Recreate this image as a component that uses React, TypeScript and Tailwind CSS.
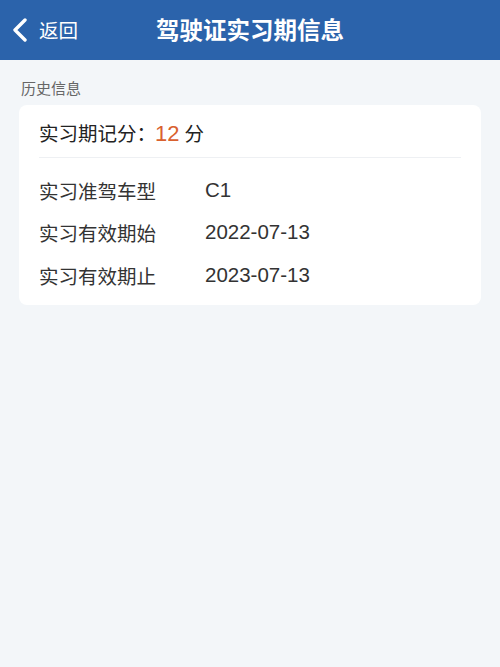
const rows = [
  { label: '实习准驾车型', value: 'C1' },
  { label: '实习有效期始', value: '2022-07-13' },
  { label: '实习有效期止', value: '2023-07-13' },
];

const latin = { fontFamily: '"Liberation Sans", "Noto Sans CJK SC", sans-serif' };

export default function App() {
  return (
    <div
      className="min-h-[667px] bg-[#f3f6f9]"
      style={{ fontFamily: '"Noto Sans CJK SC", "Liberation Sans", sans-serif' }}
    >
      <div className="relative flex h-[60px] items-center bg-[#2b63ab] text-white">
        <div className="flex items-center pl-[11px]">
          <svg width="17" height="24" viewBox="0 0 17 24" fill="none">
            <polyline
              points="14,2 4,12 14,22"
              stroke="white"
              strokeWidth="3.4"
              strokeLinecap="round"
              strokeLinejoin="round"
            />
          </svg>
          <span className="ml-[11px] text-[19.5px]">返回</span>
        </div>
        <div className="pointer-events-none absolute left-0 right-0 text-center text-[23.5px] font-bold">
          驾驶证实习期信息
        </div>
      </div>

      <div className="px-[19px] pt-[18px]">
        <p className="pl-[2px] text-[15px] leading-[20px] text-[#666]">历史信息</p>
        <div className="mt-[7px] rounded-[8px] bg-white px-[20px] pb-[8px]">
          <div className="flex h-[52px] items-center pt-[4px] text-[19.5px] text-[#222]">
            <span>实习期记分：</span>
            <span className="-ml-[1px] text-[22px] text-[#d9612f]" style={latin}>
              12
            </span>
            <span className="ml-[5px]">分</span>
          </div>
          <div className="h-px bg-[#eef0f3]" />
          <div className="pt-[11px]">
            {rows.map((r) => (
              <div key={r.label} className="flex h-[42.5px] items-center text-[#333]">
                <span className="w-[166px] text-[19.5px]">{r.label}</span>
                <span className="text-[20.5px]" style={latin}>
                  {r.value}
                </span>
              </div>
            ))}
          </div>
        </div>
      </div>
    </div>
  );
}
